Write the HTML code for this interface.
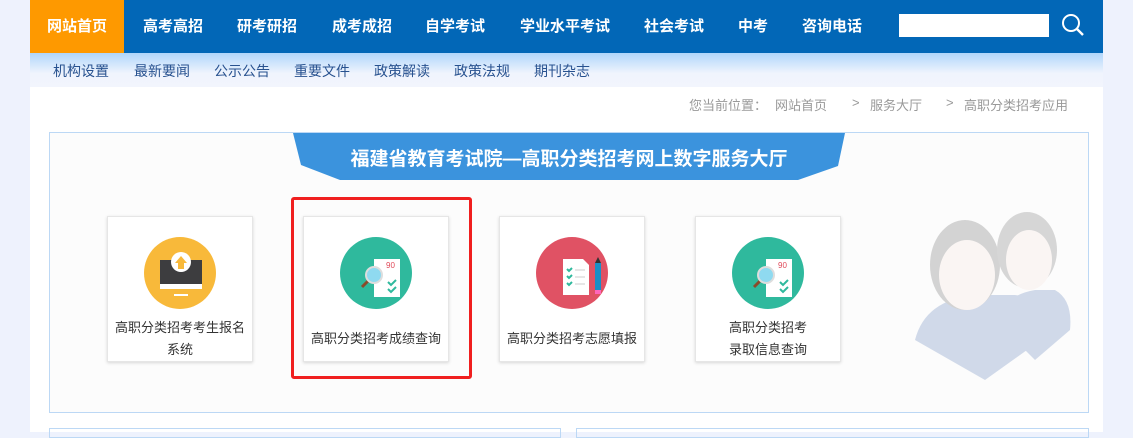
<!DOCTYPE html>
<html><head><meta charset="utf-8"><style>
*{margin:0;padding:0;box-sizing:border-box}
body{width:1133px;height:432px;overflow:hidden;background:#eef2fd;font-family:"Liberation Sans","Noto Sans CJK SC",sans-serif;position:relative}
.wrap{position:absolute;left:30px;top:0;width:1073px;height:432px;background:#fff}
.nav{position:absolute;left:30px;top:0;width:1073px;height:53px;background:#0267b7}
.nav span{position:absolute;top:0;line-height:53px;color:#fff;font-weight:bold;font-size:15px;transform:translateX(-50%);white-space:nowrap}
.home{position:absolute;left:30px;top:0;width:94px;height:53px;background:#fe9900}
.sub{position:absolute;left:30px;top:53px;width:1073px;height:34px;background:linear-gradient(#b0d6fb,#f0f4fd 60%,#f2f5fd)}
.bc{position:absolute;top:95px;font-size:13px;color:#999;white-space:nowrap}
.panel{position:absolute;left:49px;top:132px;width:1040px;height:281px;border:1px solid #bcd8f5;background:#fcfcfc}
.card{position:absolute;top:216px;width:146px;height:146px;background:#fff;border:1px solid #e6e6e6;box-shadow:0 1px 3px rgba(0,0,0,.15)}
.card .c{position:absolute;left:36px;top:20px;width:72px;height:72px;border-radius:50%}
.card p{position:absolute;left:0;width:100%;text-align:center;font-size:13px;color:#333;line-height:22px}
.s{position:absolute;top:8px;font-size:14px;color:#27518f;white-space:nowrap}
</style></head><body>
<div class="wrap"></div>
<div class="nav"></div>
<div class="home"></div>
<div class="nav" style="background:none;left:0;width:1133px">
<span style="left:77px">网站首页</span><span style="left:173px">高考高招</span><span style="left:267px">研考研招</span><span style="left:362px">成考成招</span><span style="left:455px">自学考试</span><span style="left:565px">学业水平考试</span><span style="left:674px">社会考试</span><span style="left:753px">中考</span><span style="left:832px">咨询电话</span>
</div>
<div style="position:absolute;left:899px;top:14px;width:150px;height:23px;background:#fff"></div>
<svg style="position:absolute;left:1061px;top:13px" width="24" height="24" viewBox="0 0 24 24"><circle cx="10" cy="10" r="8" fill="none" stroke="#fff" stroke-width="2"/><line x1="16" y1="16" x2="22" y2="22" stroke="#fff" stroke-width="2.4"/></svg>
<div class="sub"></div>
<div style="position:absolute;left:0;top:53px">
<span class="s" style="left:53px">机构设置</span>
<span class="s" style="left:134px">最新要闻</span>
<span class="s" style="left:214px">公示公告</span>
<span class="s" style="left:294px">重要文件</span>
<span class="s" style="left:374px">政策解读</span>
<span class="s" style="left:454px">政策法规</span>
<span class="s" style="left:534px">期刊杂志</span>
</div>
<span class="bc" style="left:689px">您当前位置：</span><span class="bc" style="left:775px">网站首页</span><span class="bc" style="left:852px">&gt;</span><span class="bc" style="left:870px">服务大厅</span><span class="bc" style="left:946px">&gt;</span><span class="bc" style="left:964px">高职分类招考应用</span>
<div class="panel"></div>
<svg style="position:absolute;left:293px;top:133px" width="552" height="48"><polygon points="0,0 552,0 545,33 505,47 47,47 8,32" fill="#3b93dd"/><text x="276" y="32" text-anchor="middle" fill="#fff" font-size="19" font-weight="bold" font-family="Liberation Sans,Noto Sans CJK SC,sans-serif">福建省教育考试院—高职分类招考网上数字服务大厅</text></svg>
<svg style="position:absolute;left:905px;top:200px;opacity:.22" width="170" height="180"><path d="M10 140 Q20 100 70 95 L110 95 Q150 100 150 130 L80 180 Z" fill="#3a63a8"/><ellipse cx="60" cy="65" rx="35" ry="45" fill="#444"/><ellipse cx="62" cy="75" rx="28" ry="35" fill="#f6e0d8"/><path d="M90 120 Q100 95 130 90 L150 90 Q168 100 165 130 L130 160 Z" fill="#3a63a8"/><ellipse cx="122" cy="50" rx="30" ry="38" fill="#555"/><ellipse cx="124" cy="60" rx="23" ry="30" fill="#f6e0d8"/></svg>
<div style="position:absolute;left:291px;top:197px;width:181px;height:182px;border:3px solid #f01f1f;border-radius:3px"></div>
<div class="card" style="left:107px"><div class="c" style="background:#f8b93a"></div>
<svg style="position:absolute;left:52px;top:35px" width="42" height="44"><rect x="0" y="8" width="42" height="24" fill="#3d3d3f"/><rect x="0" y="32" width="42" height="5" fill="#fff"/><rect x="14" y="42" width="14" height="2" fill="#fff"/><circle cx="21" cy="10" r="10" fill="#fff"/><path d="M15 11 L21 4 L27 11 L24 11 L24 17 L18 17 L18 11Z" fill="#f8b93a"/></svg>
<p style="top:100px">高职分类招考考生报名<br>系统</p></div>
<div class="card" style="left:303px"><div class="c" style="background:#2fb99d"></div>
<svg style="position:absolute;left:54px;top:40px" width="44" height="42"><rect x="16" y="2" width="26" height="38" fill="#fff"/><text x="28" y="11" font-size="8" fill="#e04a5a" font-family="Liberation Sans">90</text><path d="M30 25l3 3 5-5M30 32l3 3 5-5" stroke="#2fb99d" stroke-width="2" fill="none"/><line x1="4" y1="30" x2="10" y2="24" stroke="#8a4a2a" stroke-width="3"/><circle cx="16" cy="18" r="8" fill="#8fdaf0" stroke="#ddd" stroke-width="2"/></svg>
<p style="top:111px">高职分类招考成绩查询</p></div>
<div class="card" style="left:499px"><div class="c" style="background:#e05264"></div>
<svg style="position:absolute;left:61px;top:40px" width="44" height="42"><path d="M2 2 H22 L28 8 V38 H2Z" fill="#fff"/><path d="M6 12l2 2 3-3M6 19l2 2 3-3M6 26l2 2 3-3" stroke="#2fb99d" stroke-width="2" fill="none"/><line x1="14" y1="13" x2="24" y2="13" stroke="#ddd" stroke-width="1.5"/><line x1="14" y1="20" x2="24" y2="20" stroke="#ddd" stroke-width="1.5"/><line x1="14" y1="27" x2="24" y2="27" stroke="#ddd" stroke-width="1.5"/><rect x="34" y="6" width="6" height="30" fill="#1a8fc6"/><polygon points="34,6 37,0 40,6" fill="#333"/><rect x="34" y="33" width="6" height="4" fill="#f6b"/></svg>
<p style="top:111px">高职分类招考志愿填报</p></div>
<div class="card" style="left:695px"><div class="c" style="background:#2fb99d"></div>
<svg style="position:absolute;left:54px;top:40px" width="44" height="42"><rect x="16" y="2" width="26" height="38" fill="#fff"/><text x="28" y="11" font-size="8" fill="#e04a5a" font-family="Liberation Sans">90</text><path d="M30 25l3 3 5-5M30 32l3 3 5-5" stroke="#2fb99d" stroke-width="2" fill="none"/><line x1="4" y1="30" x2="10" y2="24" stroke="#8a4a2a" stroke-width="3"/><circle cx="16" cy="18" r="8" fill="#8fdaf0" stroke="#ddd" stroke-width="2"/></svg>
<p style="top:100px">高职分类招考<br>录取信息查询</p></div>
<div style="position:absolute;left:49px;top:428px;width:512px;height:10px;border:1px solid #bcd8f5"></div>
<div style="position:absolute;left:576px;top:428px;width:513px;height:10px;border:1px solid #bcd8f5"></div>
</body></html>
